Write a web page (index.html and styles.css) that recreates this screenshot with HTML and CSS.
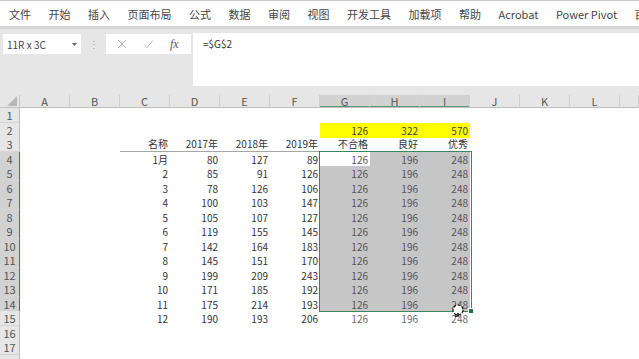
FILE: index.html
```html
<!DOCTYPE html>
<html lang="zh">
<head>
<meta charset="utf-8">
<link rel="stylesheet" href="styles.css">
</head>
<body>
<nav class="tabs">
  <span>文件</span><span>开始</span><span>插入</span><span>页面布局</span><span>公式</span><span>数据</span><span>审阅</span><span>视图</span><span>开发工具</span><span>加载项</span><span>帮助</span><span>Acrobat</span><span>Power Pivot</span><span>百度网盘</span>
</nav>
<div class="band"></div>
<div class="frow">
  <div class="fleft">
    <div class="namebox"><span>11R x 3C</span><svg width="5" height="3" viewBox="0 0 5 3"><polygon points="0,0 5,0 2.5,3" fill="#666"/></svg></div>
    <div class="dots">⋮</div>
    <div class="fxbox">
      <svg width="10" height="10" viewBox="0 0 10 10"><path d="M1 1 L9 9 M9 1 L1 9" stroke="#b4b4b4" stroke-width="1" fill="none"/></svg>
      <svg width="11" height="10" viewBox="0 0 11 10"><path d="M1 5.5 L4 8.5 L10 1.5" stroke="#b4b4b4" stroke-width="1" fill="none"/></svg>
      <span class="fx">fx</span>
    </div>
  </div>
  <div class="formula">=$G$2</div>
</div>
<div class="gap"></div>
<div class="sheet">
  <div class="hdr">
    <div class="corner"><svg width="10" height="10" viewBox="0 0 10 10"><polygon points="10,0 10,10 0,10" fill="#b8b8b8"/></svg></div>
    <div class="ch">A</div><div class="ch">B</div><div class="ch">C</div><div class="ch">D</div><div class="ch">E</div><div class="ch">F</div>
    <div class="ch on">G</div><div class="ch on">H</div><div class="ch on">I</div>
    <div class="ch">J</div><div class="ch">K</div><div class="ch">L</div><div class="ch"></div>
  </div>
  <div class="row"><div class="rh">1</div></div>
  <div class="row"><div class="rh">2</div><div></div><div></div><div></div><div></div><div></div><div class="c yel">126</div><div class="c yel">322</div><div class="c yel">570</div></div>
  <div class="row r3"><div class="rh">3</div><div></div><div class="c">名称</div><div class="c">2017年</div><div class="c">2018年</div><div class="c">2019年</div><div class="c">不合格</div><div class="c">良好</div><div class="c">优秀</div></div>
  <div class="row"><div class="rh on">4</div><div></div><div class="c">1月</div><div class="c">80</div><div class="c">127</div><div class="c">89</div><div class="c g act">126</div><div class="c g sel">196</div><div class="c g sel">248</div></div>
  <div class="row"><div class="rh on">5</div><div></div><div class="c">2</div><div class="c">85</div><div class="c">91</div><div class="c">126</div><div class="c g sel">126</div><div class="c g sel">196</div><div class="c g sel">248</div></div>
  <div class="row"><div class="rh on">6</div><div></div><div class="c">3</div><div class="c">78</div><div class="c">126</div><div class="c">106</div><div class="c g sel">126</div><div class="c g sel">196</div><div class="c g sel">248</div></div>
  <div class="row"><div class="rh on">7</div><div></div><div class="c">4</div><div class="c">100</div><div class="c">103</div><div class="c">147</div><div class="c g sel">126</div><div class="c g sel">196</div><div class="c g sel">248</div></div>
  <div class="row"><div class="rh on">8</div><div></div><div class="c">5</div><div class="c">105</div><div class="c">107</div><div class="c">127</div><div class="c g sel">126</div><div class="c g sel">196</div><div class="c g sel">248</div></div>
  <div class="row"><div class="rh on">9</div><div></div><div class="c">6</div><div class="c">119</div><div class="c">155</div><div class="c">145</div><div class="c g sel">126</div><div class="c g sel">196</div><div class="c g sel">248</div></div>
  <div class="row"><div class="rh on">10</div><div></div><div class="c">7</div><div class="c">142</div><div class="c">164</div><div class="c">183</div><div class="c g sel">126</div><div class="c g sel">196</div><div class="c g sel">248</div></div>
  <div class="row"><div class="rh on">11</div><div></div><div class="c">8</div><div class="c">145</div><div class="c">151</div><div class="c">170</div><div class="c g sel">126</div><div class="c g sel">196</div><div class="c g sel">248</div></div>
  <div class="row"><div class="rh on">12</div><div></div><div class="c">9</div><div class="c">199</div><div class="c">209</div><div class="c">243</div><div class="c g sel">126</div><div class="c g sel">196</div><div class="c g sel">248</div></div>
  <div class="row"><div class="rh on">13</div><div></div><div class="c">10</div><div class="c">171</div><div class="c">185</div><div class="c">192</div><div class="c g sel">126</div><div class="c g sel">196</div><div class="c g sel">248</div></div>
  <div class="row"><div class="rh on">14</div><div></div><div class="c">11</div><div class="c">175</div><div class="c">214</div><div class="c">193</div><div class="c g sel">126</div><div class="c g sel">196</div><div class="c g sel">248</div></div>
  <div class="row"><div class="rh">15</div><div></div><div class="c">12</div><div class="c">190</div><div class="c">193</div><div class="c">206</div><div class="c lt">126</div><div class="c lt">196</div><div class="c lt">248</div></div>
  <div class="row"><div class="rh">16</div></div>
  <div class="row"><div class="rh">17</div></div>
  <div class="row"><div class="rh">18</div></div>
  <div class="selbox"></div>
  <div class="handle"></div>
  <svg class="cursor" width="14" height="14" viewBox="0 0 14 14"><circle cx="7" cy="6" r="5" fill="#fff" stroke="#111" stroke-width="1.2" stroke-dasharray="3 1.5"/><path d="M7 9 V12 H4" stroke="#111" stroke-width="1.5" fill="none"/></svg>
</div>
</body>
</html>
```

FILE: styles.css
```css
* { box-sizing: border-box; margin: 0; padding: 0; }
body {
  width: 639px;
  height: 359px;
  overflow: hidden;
  background: #fff;
  color: #333;
  font-family: "Noto Sans CJK SC", "Noto Sans", sans-serif;
}
.tabs {
  height: 26px;
  border-top: 1px solid #c8c8c8;
  display: flex;
  align-items: center;
  gap: 17.5px;
  padding-left: 9px;
  font-size: 11px;
  color: #444;
  white-space: nowrap;
  overflow: hidden;
}
.band { height: 3px; background: #d4d4d4; }
.frow { height: 57px; background: #e6e6e6; display: flex; }
.fleft {
  width: 193px;
  flex: none;
  display: flex;
  align-items: flex-start;
  padding: 5px 0 0 3px;
}
.namebox {
  width: 78px;
  height: 20px;
  background: #fff;
  display: flex;
  align-items: center;
  justify-content: space-between;
  padding: 0 4px 0 4px;
  font-size: 10px;
  color: #444;
}
.dots {
  width: 25px;
  height: 20px;
  text-align: center;
  color: #b0b0b0;
  font-size: 10px;
  line-height: 20px;
}
.fxbox {
  width: 85px;
  height: 20px;
  background: #fff;
  display: flex;
  align-items: center;
  gap: 16px;
  padding-left: 11px;
}
.fx {
  font-family: "Liberation Serif", serif;
  font-style: italic;
  font-size: 12px;
  color: #555;
}
.formula {
  flex: 1;
  margin-top: 4px;
  background: #fff;
  font-size: 10px;
  color: #333;
  padding: 3px 10px;
}
.gap { height: 9px; background: #e6e6e6; }
.sheet { position: relative; }
.hdr {
  display: grid;
  grid-template-columns: 20px repeat(12, 50px) 1fr;
  height: 13px;
  background: #e6e6e6;
  border-bottom: 1px solid #bdbdbd;
}
.corner {
  border-right: 1px solid #c8c8c8;
  display: flex;
  align-items: flex-end;
  justify-content: flex-end;
  padding: 0 2px 1px 0;
}
.ch {
  border-right: 1px solid #cfcfcf;
  text-align: center;
  font-size: 11px;
  line-height: 12px;
  color: #555;
}
.ch.on { background: #d2d2d2; box-shadow: inset 0 -1px 0 #5e9a78; }
.row {
  display: grid;
  grid-template-columns: 20px 100px repeat(7, 50px) 1fr;
  height: 14.5px;
  font-size: 10px;
}
.rh {
  background: #e6e6e6;
  border-right: 1px solid #bdbdbd;
  border-bottom: 1px solid #d4d4d4;
  text-align: center;
  font-size: 11px;
  line-height: 14px;
  color: #555;
}
.rh.on { background: #d2d2d2; border-right: 1.5px solid #2f7f55; }
.c {
  text-align: right;
  padding-right: 2px;
  line-height: 15px;
  white-space: nowrap;
  color: #333;
}
.yel { background: #ffff00; color: #444; }
.r3 .c { border-bottom: 1px solid #a6a6a6; line-height: 14px; }
.g { color: #555; }
.sel { background: #c6c6c6; }
.act { background: #fff; }
.lt { color: #6a6a6a; }
.selbox {
  position: absolute;
  left: 319px;
  top: 55.5px;
  width: 153px;
  height: 161px;
  border: 1.5px solid #3a8660;
}
.handle {
  position: absolute;
  left: 468px;
  top: 213px;
  width: 6px;
  height: 6px;
  background: #217346;
  border: 1px solid #fff;
}
.cursor { position: absolute; left: 451px; top: 209px; }
```
